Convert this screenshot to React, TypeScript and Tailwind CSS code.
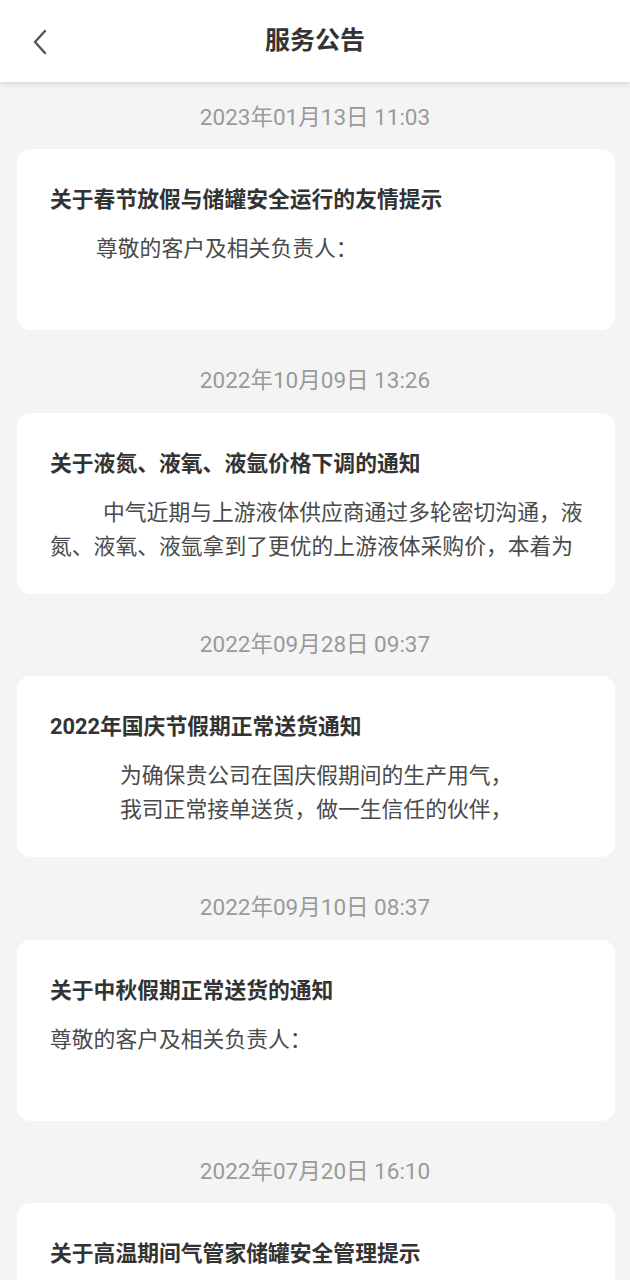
import React from 'react';

interface Notice {
  date: string;
  title: string;
  lines: string[];
  block: string; // padding for the whole body block
  first: string; // extra indent on the first line only
}

const notices: Notice[] = [
  {
    date: '2023年01月13日 11:03',
    title: '关于春节放假与储罐安全运行的友情提示',
    lines: ['尊敬的客户及相关负责人：'],
    block: '',
    first: 'pl-[46px]',
  },
  {
    date: '2022年10月09日 13:26',
    title: '关于液氮、液氧、液氩价格下调的通知',
    lines: ['中气近期与上游液体供应商通过多轮密切沟通，液', '氮、液氧、液氩拿到了更优的上游液体采购价，本着为'],
    block: '',
    first: 'pl-[53px]',
  },
  {
    date: '2022年09月28日 09:37',
    title: '2022年国庆节假期正常送货通知',
    lines: ['为确保贵公司在国庆假期间的生产用气，', '我司正常接单送货，做一生信任的伙伴，'],
    block: 'pl-[70px]',
    first: '',
  },
  {
    date: '2022年09月10日 08:37',
    title: '关于中秋假期正常送货的通知',
    lines: ['尊敬的客户及相关负责人：'],
    block: '',
    first: '',
  },
  {
    date: '2022年07月20日 16:10',
    title: '关于高温期间气管家储罐安全管理提示',
    lines: ['尊敬的客户及相关负责人：'],
    block: '',
    first: 'pl-[46px]',
  },
];

const font = { fontFamily: 'Roboto, "Noto Sans CJK SC", sans-serif' };

export default function App() {
  return (
    <div className="h-screen bg-[#f4f4f4] overflow-hidden" style={font}>
      {/* Header */}
      <div className="relative z-10 h-[82px] bg-white flex items-center justify-center shadow-[0_2px_6px_rgba(0,0,0,0.12)]">
        <button className="absolute left-[26px] top-[24px] p-1">
          <svg width="20" height="28" viewBox="0 0 20 28" fill="none">
            <polyline points="15,3 5,14 15,25" stroke="#555" strokeWidth="2.4" strokeLinecap="round" strokeLinejoin="round" />
          </svg>
        </button>
        <h1 className="text-[25px] font-bold text-[#333]">服务公告</h1>
      </div>

      {/* List */}
      <div className="pt-[4px]">
        {notices.map((n) => (
          <div key={n.date} className="mb-[19.5px]">
            <div className="h-[63px] flex items-center justify-center text-[22.5px] text-[#9a9a9a]">
              {n.date}
            </div>
            <div className="ml-[17px] mr-[15px] h-[181px] rounded-[14px] bg-white px-[33px] pt-[36px] overflow-hidden">
              <h2 className="text-[21.8px] leading-[30px] font-bold text-[#333] whitespace-nowrap">{n.title}</h2>
              <div className={`mt-[17px] text-[21.8px] leading-[34px] text-[#4a4a4a] ${n.block}`}>
                {n.lines.map((l, i) => (
                  <p key={l} className={`whitespace-nowrap ${i === 0 ? n.first : ''}`}>
                    {l}
                  </p>
                ))}
              </div>
            </div>
          </div>
        ))}
      </div>
    </div>
  );
}
